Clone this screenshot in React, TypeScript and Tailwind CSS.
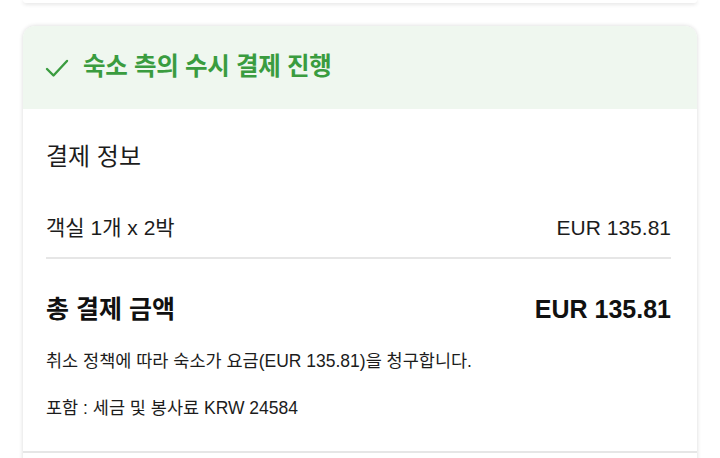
import React from 'react';

const FONT = '"Liberation Sans", "Noto Sans CJK KR", sans-serif';

const CheckIcon = () => (
  <svg width="24" height="20" viewBox="0 0 24 20" fill="none">
    <path
      d="M2 11 L8.5 17.5 L22 3"
      stroke="#3a9c3f"
      strokeWidth="2.4"
      strokeLinecap="round"
      strokeLinejoin="round"
    />
  </svg>
);

const App = () => {
  return (
    <div
      className="w-[720px] h-[458px] overflow-hidden bg-white px-[23px]"
      style={{ fontFamily: FONT }}
    >
      {/* 위 카드 끝부분 */}
      <div className="h-[3px] rounded-b-xl bg-white shadow-[0_1px_4px_rgba(0,0,0,0.15)]" />

      {/* 결제 카드 */}
      <div className="mt-[23px] rounded-xl bg-white shadow-[0_0_4px_rgba(0,0,0,0.16)] overflow-hidden">
        {/* 헤더 */}
        <div className="h-[83px] bg-[#eff7ef] flex items-center gap-[14px] pl-[22px]">
          <CheckIcon />
          <span className="text-[24.5px] font-bold text-[#3a9c3f] tracking-[-0.3px]">
            숙소 측의 수시 결제 진행
          </span>
        </div>

        {/* 결제 정보 */}
        <div className="pl-[23px] pr-[26px]">
          <div className="pt-[34px] text-[24px] text-[#1c1c1c] leading-[28px]">결제 정보</div>

          <div className="mt-[45px] flex justify-between items-center text-[21px] text-[#1c1c1c] leading-[24px]">
            <span>객실 1개 x 2박</span>
            <span>EUR 135.81</span>
          </div>

          <div className="mt-[17px] h-[2px] bg-[#e6e6e6]" />

          <div className="mt-[36px] flex justify-between items-center text-[25px] font-bold text-[#111] leading-[28px]">
            <span>총 결제 금액</span>
            <span>EUR 135.81</span>
          </div>

          <div className="mt-[28px] text-[17.5px] text-[#1c1c1c] leading-[20px]">
            취소 정책에 따라 숙소가 요금(EUR 135.81)을 청구합니다.
          </div>
          <div className="mt-[27px] text-[17.5px] text-[#1c1c1c] leading-[20px]">
            포함 : 세금 및 봉사료 KRW 24584
          </div>
        </div>

        <div className="mt-[33px] h-[2px] bg-[#e6e6e6]" />
        <div className="h-[40px]" />
      </div>
    </div>
  );
};

export default App;
